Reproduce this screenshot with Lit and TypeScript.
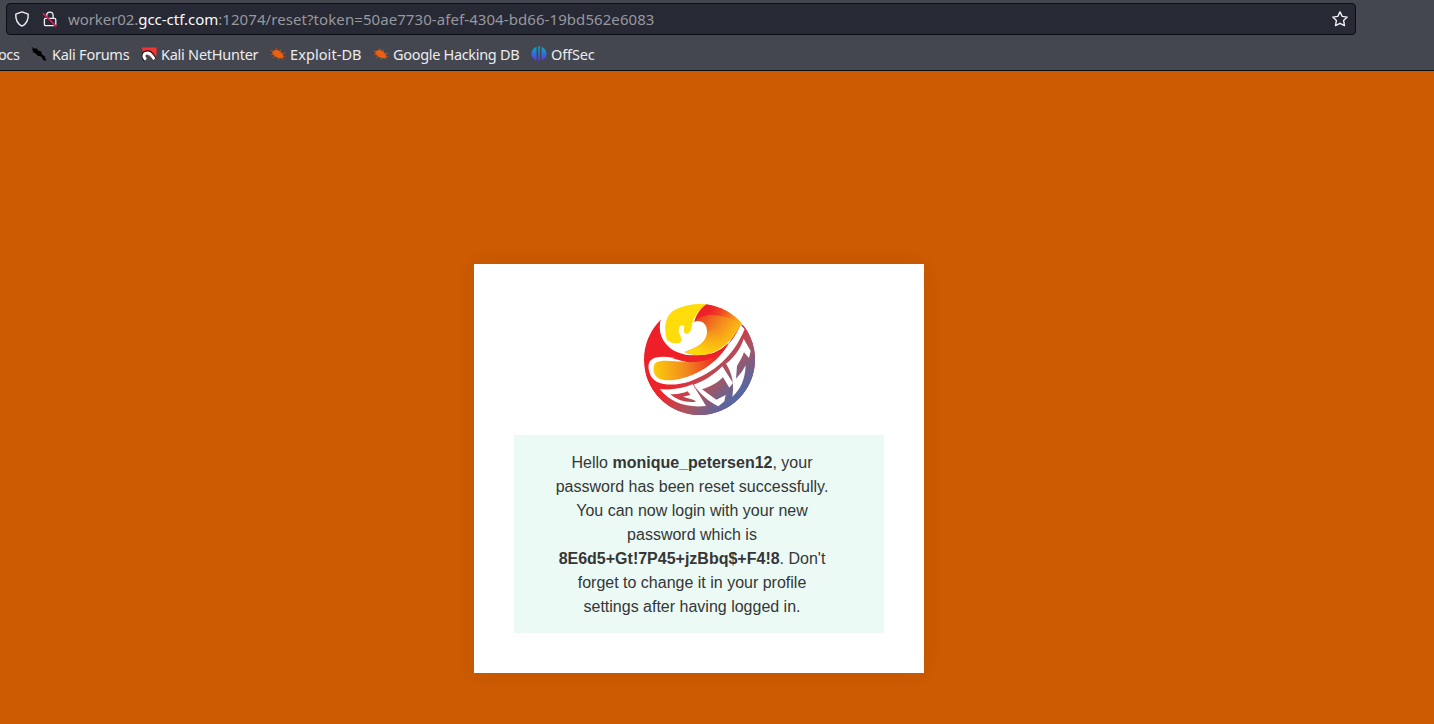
import { LitElement, html, css } from "lit";
import { customElement } from "lit/decorators.js";

const bug = html`<svg class="ico" viewBox="0 0 16 16"><path d="M2.500 5.500C4.500 3.200 8 3.500 10.500 5.800S14.500 11 12.500 12 5.500 11.500 4 9.500 1.800 6.500 2.500 5.500z" fill="#ec5e10"/><path d="M.5 4.500l3.500 1.500M1 8.500h3.500M2.500 12l3-1.500M6 2l1.500 2.500M10 3l.5 2.500M12 7.500l3.500-.5M12.500 10l3 1M9 12l-1 2M12 12l1.500 1.500" stroke="#d4550f" stroke-width=".7" fill="none"/></svg>`;
const dragon = html`<svg class="ico" viewBox="0 0 16 16"><path d="M.3.8l3.700 2 2-.5.500 2L10.300 5.500l.7 3 3 2 .5 2.500 1.300 1.800-3.300-.5-2.500-3.800-3.200-.8L4.500 7.500 1.500 6l1-.8L.5 3.500l1.700-.3z" fill="#000"/></svg>`;
const hunter = html`<svg class="ico" viewBox="0 0 16 16"><path d="M1 1.500L15.800 1.500 15 14 2 7z" fill="#f23434"/><path d="M4.500 14C1 10.500 2.500 6.300 6.500 6.300c4.500 0 5 4.200 7.500 7" fill="none" stroke="#1a1014" stroke-width="4"/><path d="M5 13.500C1.300 10.500 3 7 6.500 7c4 0 4.500 4 7 6.200" fill="none" stroke="#fff" stroke-width="3"/></svg>`;
const offsec = html`<svg class="ico" viewBox="0 0 16 16"><defs><linearGradient id="os" x1="0" y1="0" x2="0" y2="1"><stop offset="0" stop-color="#08a9bd"/><stop offset=".55" stop-color="#3669dc"/><stop offset="1" stop-color="#6130cc"/></linearGradient></defs><path d="M5.500.8v13.800C-1 12.500-1.500 3.500 5.500.8zM10.500.8v13.800C17 12.500 17.500 3.500 10.500.8zM7.200.3h1.600v15.400H7.200z" fill="url(#os)"/></svg>`;

@customElement("gcc-logo")
export class GccLogo extends LitElement {
  static styles = css`
    :host { display: block; width: 111px; height: 111px; }
    svg { display: block; width: 111px; height: 111px; }
  `;
  render() {
    return html`<svg viewBox="30 30 333 333" role="img" aria-label="GCC">
      <defs>
        <clipPath id="disc"><circle cx="196.500" cy="196.500" r="166.500"/></clipPath>
        <linearGradient id="rim" gradientUnits="userSpaceOnUse" x1="186" y1="185" x2="322" y2="318">
          <stop offset="0" stop-color="#ee2229"/><stop offset=".2" stop-color="#d63640"/><stop offset=".5" stop-color="#a65562"/><stop offset="1" stop-color="#426cb2"/>
        </linearGradient>
        <linearGradient id="fire" gradientUnits="userSpaceOnUse" x1="205" y1="70" x2="290" y2="135">
          <stop offset="0" stop-color="#e94a20"/><stop offset=".5" stop-color="#f48a1e"/><stop offset="1" stop-color="#fcbc12"/>
        </linearGradient>
        <linearGradient id="flare" gradientUnits="userSpaceOnUse" x1="225" y1="45" x2="305" y2="85">
          <stop offset="0" stop-color="#ee2028"/><stop offset=".4" stop-color="#ef4623"/><stop offset="1" stop-color="#fba51a"/>
        </linearGradient>
        <linearGradient id="drop" gradientUnits="userSpaceOnUse" x1="60" y1="220" x2="245" y2="205">
          <stop offset="0" stop-color="#fccb0b"/><stop offset=".5" stop-color="#f28b1e"/><stop offset="1" stop-color="#ec2927"/>
        </linearGradient>
        <linearGradient id="belly" gradientUnits="userSpaceOnUse" x1="200" y1="180" x2="250" y2="110">
          <stop offset="0" stop-color="#fcd90b"/><stop offset="1" stop-color="#fcd50b" stop-opacity="0"/>
        </linearGradient>
      </defs>
      <g clip-path="url(#disc)">
        <path d="M20 62H86C70 100 78 145 120 170C170 195 240 192 280 155L320 92 380 100V380H20z" fill="#ee1f28"/>
        <path d="M86 62C70 95 76 135 105 157C130 174 155 182 190 183L240 130 200 60z" fill="#fff"/>
        <path d="M222 25C202 42 188 58 181 84C200 75 221 90 219 115C218 143 195 159 152 174C168 182 190 184 212 183C255 175 298 140 319 94L345 80 290 20z" fill="url(#fire)"/>
        <path d="M219 115C218 143 195 159 152 174C168 182 190 184 212 183C255 175 298 140 319 94L260 90z" fill="url(#belly)"/>
        <path d="M222 25C202 42 188 58 181 84C205 55 255 55 322 88L345 75 290 20z" fill="url(#flare)"/>
        <path d="M222 22C160 20 110 40 97 80C91 101 94 117 98 136C108 149 136 153 143 140C143 130 136 121 134 112C133 97 144 90 150 96C152 101 147 111 152 118C159 123 169 115 172 105C175 90 175 80 186 64C194 49 207 37 222 28z" fill="#ffdc0a"/>
        <path d="M36 210L110 190C175 193 220 205 264 180C288 165 306 142 318 94L380 95V380H20z" fill="url(#rim)"/>
        <path d="M105 190C150 182 185 184 212 183C240 179 262 168 282 148C262 190 200 208 105 191z" fill="#ee1f28"/>
        <path d="M320 92C300 139 262 183 216 203C162 209 115 180 63 191C43 197 39 215 48 240C60 277 120 277 165 263C238 238 297 189 332 106z" fill="#fff"/>
        <path d="M108 191C160 190 205 192 240 180C258 172 271 161 284 146C274 168 262 183 240 197L200 208C165 211 140 197 108 191z" fill="#ec2427"/>
        <path d="M65 206C82 196 115 201 151 204C190 207 225 199 262 180C225 223 172 251 120 258C88 261 62 256 59 230C58 220 59 211 65 206z" fill="url(#drop)"/>
        <path d="M77 285C113 289 145 283 176 271L198 306 216 336C157 342 107 325 77 285z" fill="#fff"/>
        <path d="M109 300C128 302 146 298 161 292L169 303 147 308 180 318 186 323C154 326 129 319 109 300z" fill="url(#rim)"/>
        <path d="M179 272C213 261 241 241 265 217L297 267 286 281 267 250C252 265 229 279 204 286L247 317 275 303 271 322 253 337C222 321 198 300 179 272z" fill="#fff"/>
        <path d="M276 209C301 189 320 164 329 134L350 171 345 192 330 175C325 190 317 202 309 216L306 254 323 234 335 214C333 257 320 286 295 308C301 270 295 239 276 209z" fill="#fff"/>
      </g>
    </svg>`;
  }
}

@customElement("app-root")
export class AppRoot extends LitElement {
  static styles = css`
    :host { display: flex; flex-direction: column; width: 1434px; height: 724px; overflow: hidden; background: #cc5b02; font-family: "Liberation Sans", sans-serif; }
    * { box-sizing: border-box; }
    svg { display: block; flex: none; }
    .chrome { height: 71px; flex: none; background: #44474f; border-bottom: 1px solid #101116; padding-top: 3px; font-family: "Noto Sans", sans-serif; }
    .bar { display: flex; align-items: center; width: 1350px; height: 32px; margin-left: 6px; padding: 0 7px; background: #272935; border: 1px solid #0d0e13; border-radius: 4px; }
    .url { flex: 1; margin-left: 10px; font-size: 15px; line-height: 30px; color: #97989e; white-space: pre; letter-spacing: .075px; }
    .url b { font-weight: 400; color: #fbfbfe; letter-spacing: -.02px; }
    .url .host { letter-spacing: -.08px; }
    .lock { margin-left: 12px; }
    .marks { display: flex; align-items: center; height: 35px; padding-top: 3px; color: #ececee; font-size: 14.500px; letter-spacing: -.25px; white-space: nowrap; }
    .mark { display: flex; align-items: center; gap: 4px; height: 20px; }
    .ico { width: 16px; height: 16px; }
    .docs { margin-left: -2px; width: 33px; letter-spacing: -.4px; }
    .forums { width: 110px; gap: 5px; }
    .nethunter { width: 129px; }
    .exploit { width: 103px; letter-spacing: .08px; }
    .google { width: 158px; letter-spacing: -.32px; }
    .offsec { letter-spacing: -.12px; }
    .page { display: flex; flex-direction: column; align-items: flex-start; padding: 193px 0 0 474px; }
    .card { display: flex; flex-direction: column; align-items: center; gap: 20px; width: 450px; height: 409px; padding: 40px; background: #fff; box-shadow: 0 0 20px rgba(0,0,0,.06); }
    .note { width: 370px; height: 198px; padding: 16px 54px 14px 40px; background: #ebfaf5; color: #363636; font-size: 16px; line-height: 24px; text-align: center; white-space: nowrap; }
  `;
  render() {
    return html`
      <header class="chrome">
        <div class="bar">
          <svg width="16" height="16" viewBox="0 0 16 16" fill="none" stroke="#f0f0f4" stroke-width="1.400" stroke-linejoin="round"><path d="M8 .9l6.200 2.300c.3 5.300-1.400 9.500-6.200 11.900C3.200 12.700 1.500 8.500 1.800 3.200z"/></svg>
          <svg class="lock" width="16" height="16" viewBox="0 0 16 16" fill="none"><path d="M4.700 7V4.300a3.200 3.200 0 0 1 6.400 0V7M3.500 7.300h8.800c1 0 1.500.5 1.500 1.500v4.400c0 1-.5 1.500-1.500 1.500H4c-1 0-1.600-.5-1.600-1.500V8.600c0-.8.500-1.300 1.100-1.300z" stroke="#f0f0f4" stroke-width="1.300"/><path d="M2 3.300l11 11.500" stroke="#272935" stroke-width="1.500"/><path d="M1 2.300l13.500 13.200" stroke="#e31b50" stroke-width="1.700"/></svg>
          <div class="url"><span class="host">worker02.</span><b>gcc-ctf.com</b>:12074/reset?token=50ae7730-afef-4304-bd66-19bd562e6083</div>
          <svg width="16" height="16" viewBox="0 0 16 16" fill="none" stroke="#f0f0f4" stroke-width="1.400" stroke-linejoin="round"><path d="M8 .9l2.200 4.500 5 .7-3.600 3.500.9 5L8 12.300l-4.500 2.300.9-5L.8 6.100l5-.7z"/></svg>
        </div>
        <nav class="marks">
          <span class="mark docs">ocs</span>
          <span class="mark forums">${dragon}<span>Kali Forums</span></span>
          <span class="mark nethunter">${hunter}<span>Kali NetHunter</span></span>
          <span class="mark exploit">${bug}<span>Exploit-DB</span></span>
          <span class="mark google">${bug}<span>Google Hacking DB</span></span>
          <span class="mark offsec">${offsec}<span>OffSec</span></span>
        </nav>
      </header>
      <main class="page">
        <section class="card">
          <gcc-logo></gcc-logo>
          <div class="note">Hello <b>monique_petersen12</b>, your<br>password has been reset successfully.<br>You can now login with your new<br>password which is<br><b>8E6d5+Gt!7P45+jzBbq$+F4!8</b>. Don't<br>forget to change it in your profile<br>settings after having logged in.</div>
        </section>
      </main>`;
  }
}
